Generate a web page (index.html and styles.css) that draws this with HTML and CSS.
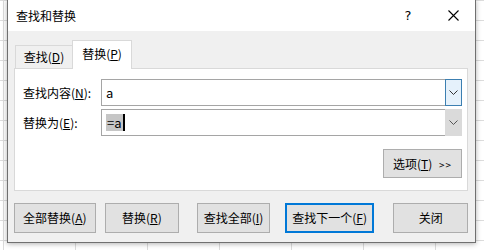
FILE: index.html
```html
<!DOCTYPE html>
<html lang="zh-CN">
<head>
    <meta charset="UTF-8">
    <meta name="viewport" content="width=device-width, initial-scale=1.0">
    <title>查找和替换</title>
    <link rel="stylesheet" href="styles.css">
</head>
<body>
  <div class="dialog">
    <div class="titlebar">
      <span class="title">查找和替换</span>
      <span class="help">?</span>
      <span class="close">
        <svg width="11" height="11" viewBox="0 0 11 11"><path d="M0.5 0.5 L10.5 10.5 M10.5 0.5 L0.5 10.5" stroke="#000" stroke-width="1.1" fill="none"/></svg>
      </span>
    </div>

    <div class="content">
      <div class="tabs">
        <div class="tab">查找(<u>D</u>)</div>
        <div class="tab active">替换(<u>P</u>)</div>
      </div>

      <div class="panel">
        <div class="row">
          <label class="label">查找内容(<u>N</u>):</label>
          <div class="combo">
            <span class="value">a</span>
            <span class="drop focus">
              <svg width="9" height="5" viewBox="0 0 9 5"><path d="M0.5 0.5 L4.5 4.5 L8.5 0.5" stroke="#333" stroke-width="1" fill="none"/></svg>
            </span>
          </div>
        </div>
        <div class="row second">
          <label class="label">替换为(<u>E</u>):</label>
          <div class="combo">
            <span class="value"><span class="selected">=a</span><span class="caret"></span></span>
            <span class="drop">
              <svg width="9" height="5" viewBox="0 0 9 5"><path d="M0.5 0.5 L4.5 4.5 L8.5 0.5" stroke="#555" stroke-width="1" fill="none"/></svg>
            </span>
          </div>
        </div>
        <div class="options-row">
          <button class="btn options">选项(<u>T</u>) <span class="arrows">&gt;&gt;</span></button>
        </div>
      </div>

      <div class="actions">
        <button class="btn replace-all">全部替换(<u>A</u>)</button>
        <button class="btn replace">替换(<u>R</u>)</button>
        <button class="btn find-all">查找全部(<u>I</u>)</button>
        <button class="btn find-next">查找下一个(<u>F</u>)</button>
        <button class="btn close-btn">关闭</button>
      </div>
    </div>
  </div>
</body>
</html>
```

FILE: styles.css
```css
body {
margin: 0;
width: 484px;
height: 250px;
overflow: hidden;
background-color: #fff;
background-image:
  linear-gradient(to right, #dcdcdc 1px, transparent 1px),
  linear-gradient(to bottom, #dcdcdc 1px, transparent 1px);
background-size: 72px 20px;
background-position: 3px 0;
font-family: 'Noto Sans CJK SC', 'Noto Sans', sans-serif;
font-size: 12px;
color: #000;
}

/* the dialog window sits over the sheet */
.dialog {
position: absolute;
left: 7px;
top: -1px;
width: 469px;
height: 244px;
box-sizing: border-box;
border: 1px solid #707070;
background: #f0f0f0;
box-shadow: 0 1px 5px rgba(0, 0, 0, 0.3);
display: flex;
flex-direction: column;
}

.titlebar {
height: 31px;
background: #fff;
display: flex;
align-items: center;
padding-left: 8px;
padding-right: 7px;
}

.title {
font-size: 12px;
line-height: 1;
}

.help {
margin-left: auto;
width: 30px;
text-align: center;
font-family: 'DejaVu Sans', sans-serif;
font-size: 13px;
line-height: 1;
}

.close {
margin-left: 15px;
width: 30px;
height: 31px;
display: flex;
align-items: center;
justify-content: center;
}

.content {
flex: 1;
padding: 9px 7px 9px 6px;
display: flex;
flex-direction: column;
}

.tabs {
display: flex;
align-items: flex-end;
height: 28px;
padding-left: 1px;
}

.tab {
height: 23px;
box-sizing: border-box;
width: 58px;
border: 1px solid #d9d9d9;
border-bottom: none;
display: flex;
align-items: center;
justify-content: center;
line-height: 1;
}

.tab.active {
position: relative;
z-index: 1;
height: 29px;
width: 60px;
margin-left: -1px;
margin-bottom: -1px;
background: #fff;
padding-bottom: 2px;
}

.panel {
height: 123px;
box-sizing: border-box;
background: #fff;
border: 1px solid #d9d9d9;
padding: 10px 5px 12px 8px;
}

.row {
display: flex;
align-items: center;
height: 27px;
}

.row.second {
margin-top: 3px;
}

.label {
width: 78px;
line-height: 1;
}

.combo {
flex: 1;
height: 27px;
box-sizing: border-box;
border: 1px solid #a5a5a5;
display: flex;
align-items: center;
}

.value {
flex: 1;
padding-left: 4px;
display: flex;
align-items: center;
font-size: 13px;
}

.selected {
background: #c6c6c6;
line-height: 17px;
padding: 0 1px 0 1px;
}

.caret {
width: 2px;
height: 17px;
background: #000;
}

.drop {
width: 17px;
height: 27px;
margin: -1px -1px -1px 0;
box-sizing: border-box;
background: #dadada;
display: flex;
align-items: center;
justify-content: center;
}

.drop.focus {
background: #e5f1fb;
border: 1px solid #3c7fb1;
}

.options-row {
display: flex;
justify-content: flex-end;
margin-top: 13px;
}

.btn {
height: 30px;
box-sizing: border-box;
background: #e1e1e1;
border: 1px solid #adadad;
font-family: 'Noto Sans CJK SC', 'Noto Sans', sans-serif;
font-size: 12px;
color: #000;
padding: 0;
line-height: 1;
}

.options {
width: 79px;
height: 29px;
}

.arrows {
font-size: 10px;
margin-left: 4px;
letter-spacing: 1px;
}

.actions {
display: flex;
margin-top: 12px;
}

.replace-all {
width: 82px;
}

.replace {
width: 75px;
margin-left: 9px;
}

.find-all {
width: 73px;
margin-left: 18px;
}

.find-next {
width: 90px;
margin-left: 15px;
border: 2px solid #0078d7;
}

.close-btn {
width: 75px;
margin-left: 19px;
}
```
